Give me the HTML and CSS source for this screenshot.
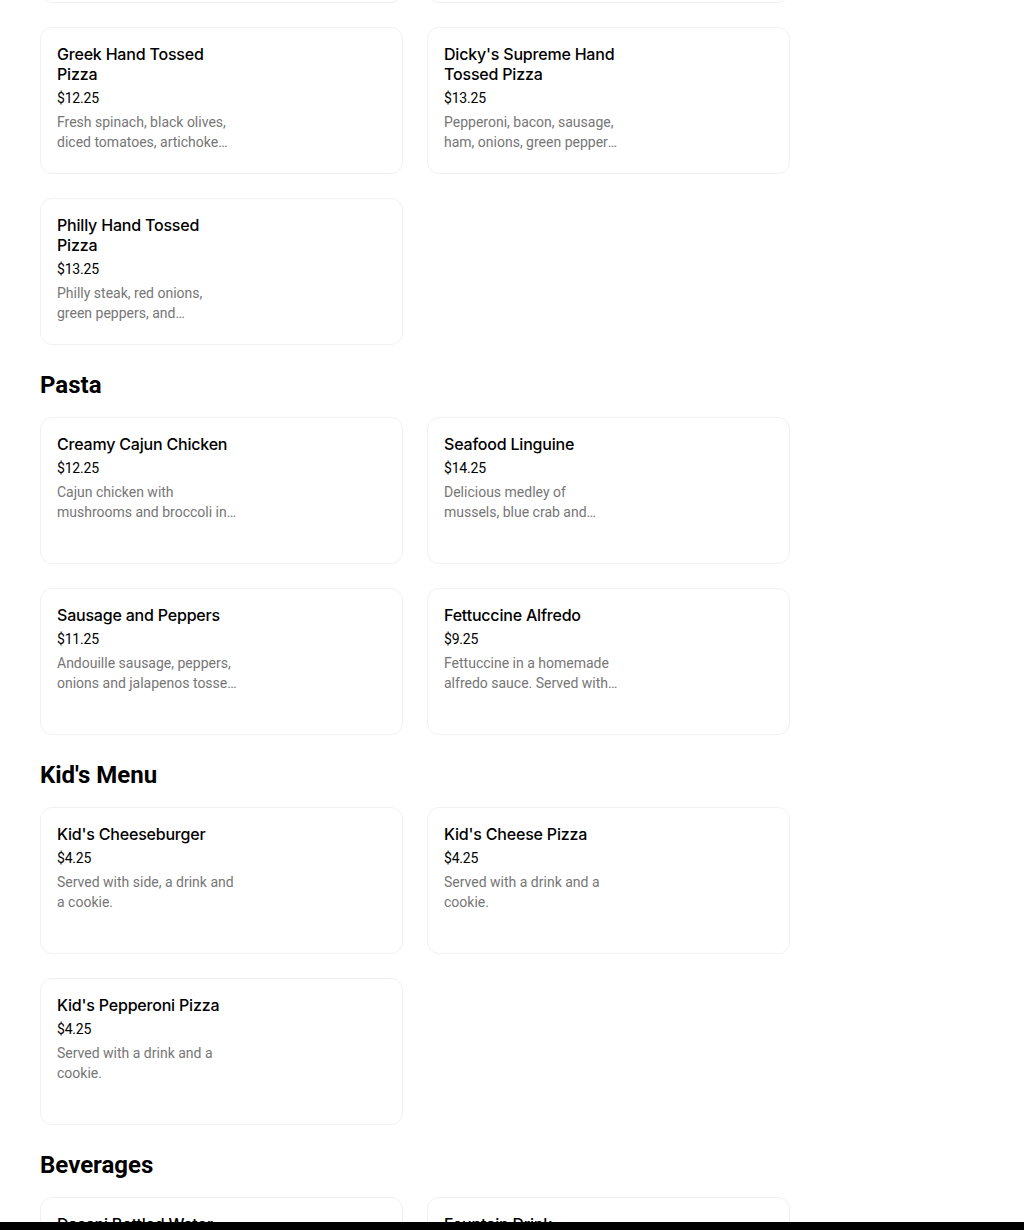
FILE: index.html
```html
<!DOCTYPE html>
<html lang="en">
  <head>
    <meta charset="UTF-8" />
    <meta name="viewport" content="width=device-width, initial-scale=1.0" />
    <link rel="stylesheet" href="styles.css">
    <title>Menu</title>
  </head>
  <body>
    <main class="menu">
      <section class="section section-scrolled">
        <ul class="item-grid">
          <li class="item-card">
            <h3 class="item-title">Cheese Hand Tossed Pizza</h3>
            <p class="item-price">$10.25</p>
            <p class="item-desc">Classic cheese pizza.</p>
          </li>
          <li class="item-card">
            <h3 class="item-title">Pepperoni Hand Tossed Pizza</h3>
            <p class="item-price">$11.25</p>
            <p class="item-desc">Pepperoni and cheese.</p>
          </li>
          <li class="item-card">
            <h3 class="item-title">Greek Hand Tossed Pizza</h3>
            <p class="item-price">$12.25</p>
            <p class="item-desc">Fresh spinach, black olives, diced tomatoes, artichoke hearts and feta cheese.</p>
          </li>
          <li class="item-card">
            <h3 class="item-title">Dicky's Supreme Hand Tossed Pizza</h3>
            <p class="item-price">$13.25</p>
            <p class="item-desc">Pepperoni, bacon, sausage, ham, onions, green peppers and black olives.</p>
          </li>
          <li class="item-card">
            <h3 class="item-title">Philly Hand Tossed Pizza</h3>
            <p class="item-price">$13.25</p>
            <p class="item-desc">Philly steak, red onions, green peppers, and mushrooms.</p>
          </li>
        </ul>
      </section>

      <section class="section">
        <h2 class="section-title">Pasta</h2>
        <ul class="item-grid">
          <li class="item-card">
            <h3 class="item-title">Creamy Cajun Chicken</h3>
            <p class="item-price">$12.25</p>
            <p class="item-desc">Cajun chicken with mushrooms and broccoli in a creamy alfredo sauce.</p>
          </li>
          <li class="item-card">
            <h3 class="item-title">Seafood Linguine</h3>
            <p class="item-price">$14.25</p>
            <p class="item-desc">Delicious medley of mussels, blue crab and shrimp.</p>
          </li>
          <li class="item-card">
            <h3 class="item-title">Sausage and Peppers</h3>
            <p class="item-price">$11.25</p>
            <p class="item-desc">Andouille sausage, peppers, onions and jalapenos tossed in marinara.</p>
          </li>
          <li class="item-card">
            <h3 class="item-title">Fettuccine Alfredo</h3>
            <p class="item-price">$9.25</p>
            <p class="item-desc">Fettuccine in a homemade alfredo sauce. Served with garlic bread.</p>
          </li>
        </ul>
      </section>

      <section class="section">
        <h2 class="section-title">Kid's Menu</h2>
        <ul class="item-grid">
          <li class="item-card">
            <h3 class="item-title">Kid's Cheeseburger</h3>
            <p class="item-price">$4.25</p>
            <p class="item-desc">Served with side, a drink and a cookie.</p>
          </li>
          <li class="item-card">
            <h3 class="item-title">Kid's Cheese Pizza</h3>
            <p class="item-price">$4.25</p>
            <p class="item-desc">Served with a drink and a cookie.</p>
          </li>
          <li class="item-card">
            <h3 class="item-title">Kid's Pepperoni Pizza</h3>
            <p class="item-price">$4.25</p>
            <p class="item-desc">Served with a drink and a cookie.</p>
          </li>
        </ul>
      </section>

      <section class="section">
        <h2 class="section-title">Beverages</h2>
        <ul class="item-grid">
          <li class="item-card">
            <h3 class="item-title">Dasani Bottled Water</h3>
            <p class="item-price">$2.25</p>
            <p class="item-desc">20 oz bottle.</p>
          </li>
          <li class="item-card">
            <h3 class="item-title">Fountain Drink</h3>
            <p class="item-price">$2.25</p>
            <p class="item-desc">Choice of soda.</p>
          </li>
        </ul>
      </section>
    </main>

    <div class="bottom-bar"></div>
  </body>
</html>
```

FILE: styles.css
```css
body {
  margin: 0;
  font-family: Inter, "Noto Sans", sans-serif;
  color: #000;
  background-color: #fff;
}

h2,
h3,
p {
  margin: 0;
  padding: 0;
}

ul {
  margin: 0;
  padding: 0;
  list-style: none;
}

.menu {
  padding: 0 40px;
}

.section {
  padding-top: 24px;
}

/* page is scrolled: only the bottom of the previous section shows */
.section-scrolled {
  margin-top: -144px;
  padding-top: 0;
}

.section-title {
  margin-bottom: 16px;

  font-family: Roboto, Inter, sans-serif;
  font-size: 24px;
  line-height: 32px;
  font-weight: 700;
}

.item-grid {
  display: grid;
  grid-template-columns: repeat(2, 363px);
  gap: 24px;
}

.item-card {
  box-sizing: border-box;
  height: 147px;
  padding: 16px;

  border: 1px solid #f1f1f1;
  border-radius: 12px;
}

.item-title {
  max-width: 178px;
  font-size: 16px;
  line-height: 20px;
  font-weight: 500;
  letter-spacing: -0.2px;
}

.item-price {
  margin-top: 4px;
  font-family: Roboto, Inter, sans-serif;
  font-size: 14px;
  line-height: 20px;
  letter-spacing: -0.2px;
}

.item-desc {
  max-width: 180px;
  margin-top: 4px;
  font-family: Roboto, Inter, sans-serif;
  font-size: 14px;
  line-height: 20px;
  color: #767676;

  display: -webkit-box;
  -webkit-line-clamp: 2;
  -webkit-box-orient: vertical;
  overflow: hidden;
}

.bottom-bar {
  position: fixed;
  left: 0;
  right: 0;
  bottom: 0;
  height: 8px;
  background-color: #000;
}
```
